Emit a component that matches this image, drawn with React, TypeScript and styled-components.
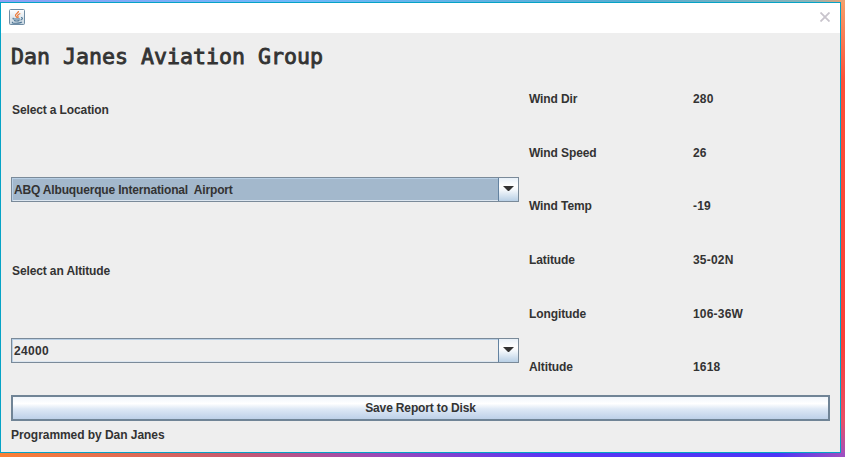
import React from 'react';
import styled, { createGlobalStyle } from 'styled-components';

const GlobalStyle = createGlobalStyle`
  * { box-sizing: border-box; }
  body { margin: 0; overflow: hidden; }
`;

const Desktop = styled.div`
  width: 845px;
  height: 457px;
  padding: 2px 4px 4px 0;
  background:
    linear-gradient(90deg, #8fa0f5, #6fb8fa 35%, #58acd0 75%, #8cb4b8 96%, #f0a070) top / 100% 2px no-repeat,
    linear-gradient(90deg, #fb8035, #c65a70 28%, #9b4ab8 45%, #5a35f5 65%, #4b35f8 92%, #a050c0) bottom / 100% 4px no-repeat,
    linear-gradient(180deg, #f5a06c, #fc5038 18%, #fa4038 75%, #e85068 92%, #a050c0) right / 4px 100% no-repeat;
`;

const Frame = styled.div`
  display: flex;
  flex-direction: column;
  width: 841px;
  height: 451px;
  border: 1px solid #05a3c6;
  background: #eeeeee;
  color: #333333;
  font: bold 12px/16px 'Liberation Sans', Arial, sans-serif;
`;

const TitleBar = styled.header`
  display: flex;
  justify-content: space-between;
  flex: 0 0 30px;
  padding: 6px 10px 0 8px;
  background: #ffffff;
`;

const CloseIcon = styled.svg`
  margin-top: 3px;
`;

const Body = styled.main`
  display: flex;
  flex-direction: column;
  padding: 0 10px;
`;

const Heading = styled.h1`
  margin: 0;
  height: 44px;
  padding-top: 11px;
  font: normal 21.6px/26px 'DejaVu Sans Mono', monospace;
  -webkit-text-stroke: 0.85px #333333;
  white-space: nowrap;
`;

const Columns = styled.div`
  display: grid;
  grid-template-columns: 508px 301px;
  column-gap: 10px;
  height: 318px;
  margin-top: -6px;
`;

const Selectors = styled.section`
  display: grid;
  grid-template-rows: 78px 82px 79px 82px;
  align-items: center;
`;

const FieldLabel = styled.label`
  padding-left: 1px;
  letter-spacing: -0.12px;
`;

const Combo = styled.button<{ $selected?: boolean }>`
  display: grid;
  grid-template-columns: 1fr 20px;
  height: 25px;
  margin-bottom: 2px;
  padding: 0;
  border: 1px solid #7a8a99;
  background: ${p => (p.$selected ? '#a3b8cc' : '#eeeeee')};
  box-shadow: inset 0 1px #b8cfe5, inset 1px 0 #b8cfe5, inset 0 -1px #dce6f0;
  color: #333333;
  font: inherit;
  letter-spacing: ${p => (p.$selected ? '-0.17px' : '0.3px')};
  text-align: left;
`;

const ComboValue = styled.span`
  padding: 4px 0 0 2px;
  white-space: pre;
`;

const Arrow = styled.span`
  display: flex;
  align-items: center;
  justify-content: center;
  border-left: 1px solid #6382a0;
  background: linear-gradient(#e8f0f8, #ffffff 35%, #f3f7fb 52%, #b8cfe5);
`;

const Readings = styled.dl`
  display: grid;
  grid-template-columns: 164px 1fr;
  grid-template-rows: repeat(6, 53.7px);
  margin: 0;
  padding-top: 1px;
  align-items: center;
`;

const ReadingName = styled.dt`
  margin: 0;
  letter-spacing: -0.1px;
`;

const ReadingValue = styled.dd`
  margin: 0;
  letter-spacing: 0.2px;
`;

const SaveButton = styled.button`
  height: 26px;
  margin-top: 6px;
  padding: 0;
  border: 2px solid #708496;
  background: linear-gradient(#f0f5fb, #ffffff 30%, #dde8f5 55%, #bdd0e8);
  color: #333333;
  font: inherit;
  letter-spacing: -0.15px;
`;

const Credit = styled.footer`
  margin-top: 6px;
  letter-spacing: -0.05px;
`;

const JavaIcon = () => (
  <svg width="17" height="17" viewBox="0 0 17 17">
    <defs>
      <linearGradient id="javaTile" x2="0" y2="1">
        <stop stopColor="#ffffff" />
        <stop offset="1" stopColor="#c5d4df" />
      </linearGradient>
    </defs>
    <rect x="0.5" y="0.5" width="15" height="15" rx="1" fill="url(#javaTile)" stroke="#708da5" />
    <path d="M9.5 2C9.8 4 6 5 6.5 6.5C6.7 7.5 8 7.5 8 9M11.3 4.5C8.7 5.7 8 6.4 9 7.4C9.4 8 9 8.7 8.7 9" fill="none" stroke="#ec7838" strokeWidth="1.2" />
    <path d="M4.5 9Q3.2 10 5.5 10H11M12 8.7C14.3 8.3 13.5 10.7 11.5 11M5 11.5Q7.5 12.5 10.5 11.5M3.8 13Q2 14.3 7 14.2Q11.5 14.2 12.8 13" fill="none" stroke="#4d7594" strokeWidth="1.1" />
  </svg>
);

const readings = [
  ['Wind Dir', '280'],
  ['Wind Speed', '26'],
  ['Wind Temp', '-19'],
  ['Latitude', '35-02N'],
  ['Longitude', '106-36W'],
  ['Altitude', '1618'],
];

const DropDown = ({ value, selected }: { value: string; selected?: boolean }) => (
  <Combo type="button" $selected={selected}>
    <ComboValue>{value}</ComboValue>
    <Arrow>
      <svg width="11" height="6" viewBox="0 0 11 6"><path d="M0 0H11L6 5H5Z" fill="#333333" /></svg>
    </Arrow>
  </Combo>
);

export default function App() {
  return (
    <Desktop>
      <GlobalStyle />
      <Frame>
        <TitleBar>
          <JavaIcon />
          <CloseIcon width="10" height="10" viewBox="0 0 10 10">
            <path d="M0.5 0.5L9.5 9.5M9.5 0.5L0.5 9.5" stroke="#c8c4cc" strokeWidth="1.8" />
          </CloseIcon>
        </TitleBar>
        <Body>
          <Heading>Dan Janes Aviation Group</Heading>
          <Columns>
            <Selectors>
              <FieldLabel>Select a Location</FieldLabel>
              <DropDown value="ABQ Albuquerque International  Airport" selected />
              <FieldLabel>Select an Altitude</FieldLabel>
              <DropDown value="24000" />
            </Selectors>
            <Readings>
              {readings.map(([name, value]) => (
                <React.Fragment key={name}>
                  <ReadingName>{name}</ReadingName>
                  <ReadingValue>{value}</ReadingValue>
                </React.Fragment>
              ))}
            </Readings>
          </Columns>
          <SaveButton type="button">Save Report to Disk</SaveButton>
          <Credit>Programmed by Dan Janes</Credit>
        </Body>
      </Frame>
    </Desktop>
  );
}
